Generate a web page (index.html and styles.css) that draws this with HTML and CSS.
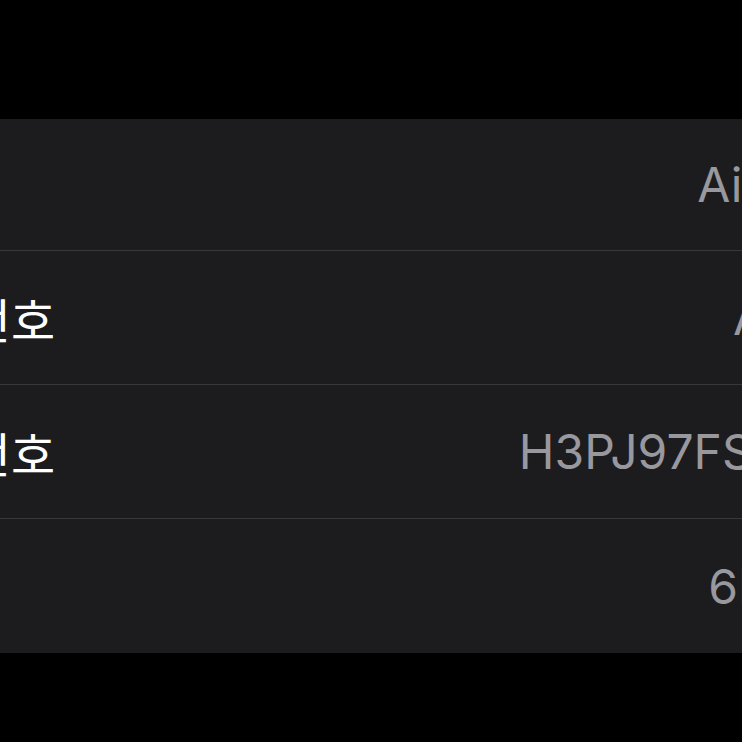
FILE: index.html
```html
<!DOCTYPE html>
<html lang="ko">
<head>
  <meta charset="UTF-8">
  <meta name="viewport" content="width=device-width, initial-scale=1">
  <title>정보</title>
  <link rel="stylesheet" href="styles.css">
</head>
<body>
  <div class="screen">
    <div class="group">
      <div class="row">
        <span class="label">이름</span>
        <span class="value">AirPods</span>
      </div>
      <div class="row">
        <span class="label">모델 번호</span>
        <span class="value">A2190</span>
      </div>
      <div class="row">
        <span class="label">일련 번호</span>
        <span class="value">H3PJ97FS0C6L</span>
      </div>
      <div class="row">
        <span class="label">버전</span>
        <span class="value">6F3210</span>
      </div>
    </div>
  </div>
</body>
</html>
```

FILE: styles.css
```css
* {
  margin: 0;
  padding: 0;
  box-sizing: border-box;
}

html, body {
  background: #000;
  overflow: hidden;
}

body {
  font-family: Inter, "Liberation Sans", "Noto Sans CJK KR", sans-serif;
  width: 742px;
  height: 742px;
}

.screen {
  padding-top: 119px;
}

.group {
  width: 1100px;
  margin-left: -180px;
  background: #1c1c1e;
  padding: 0 45px 0 45px;
}

.row {
  height: 134px;
  display: flex;
  align-items: center;
  justify-content: space-between;
  border-bottom: 1px solid #38383a;
  font-size: 48px;
}

.row:first-child {
  height: 132px;
}

.row:last-child {
  border-bottom: none;
}

.label {
  color: #fff;
  font-family: "Noto Sans CJK KR", sans-serif;
}

.value {
  color: #98989e;
  white-space: nowrap;
}
```
